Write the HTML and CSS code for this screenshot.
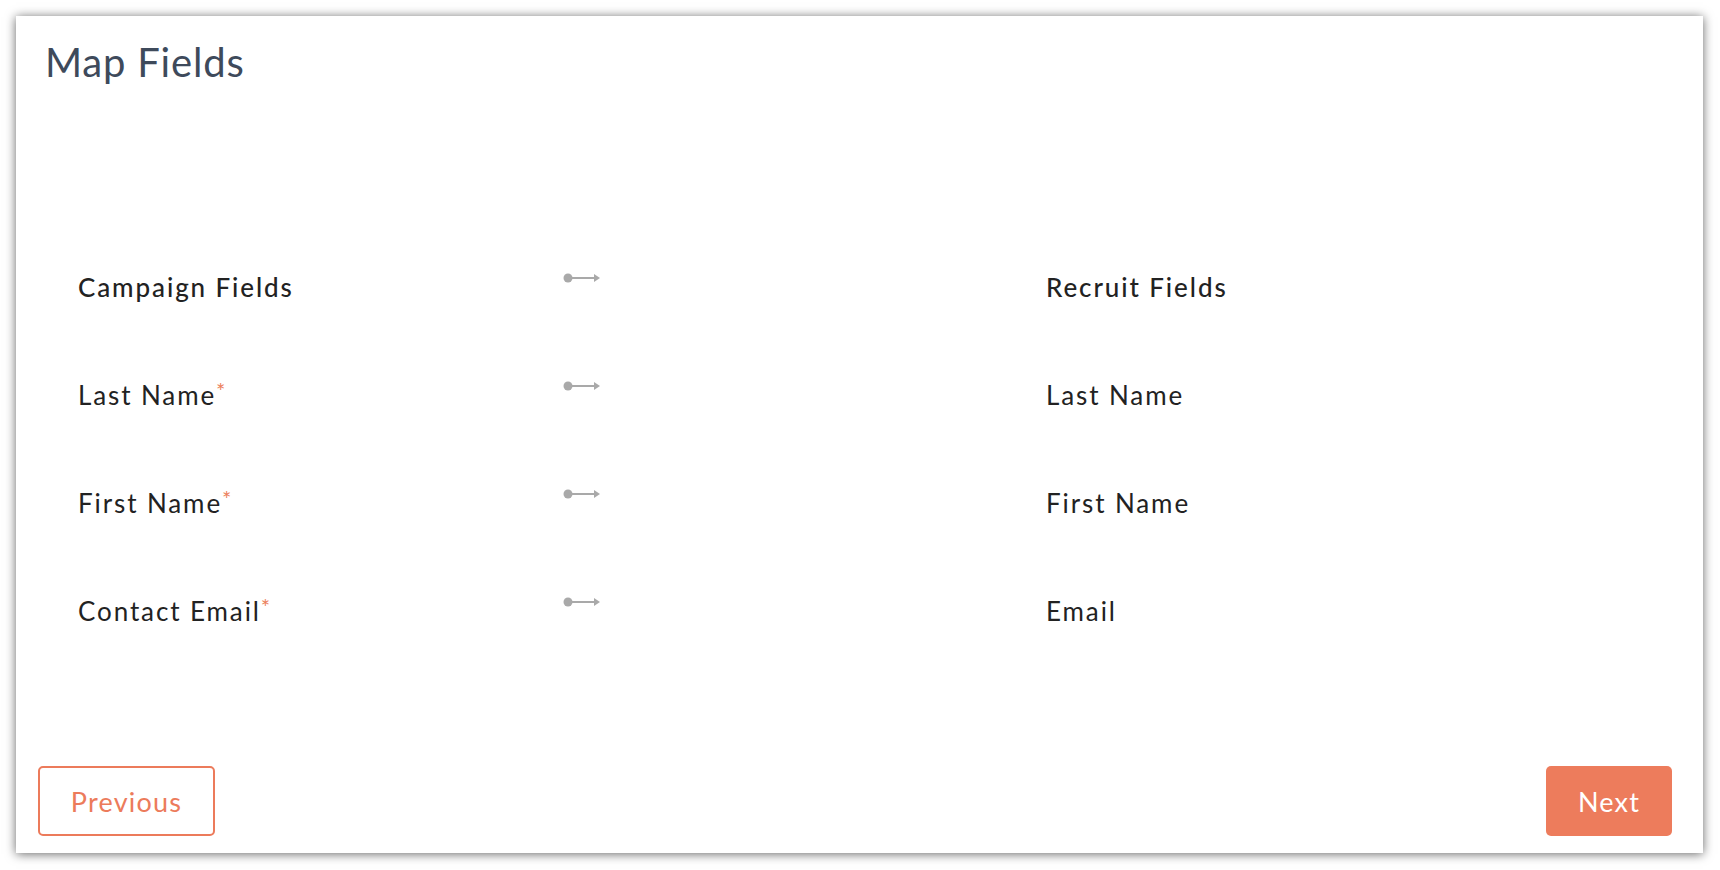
FILE: index.html
```html
<!DOCTYPE html>
<html>
<head>
<meta charset="utf-8">
<link rel="stylesheet" href="styles.css">
</head>
<body>
<div class="card">
  <h1 class="title">Map Fields</h1>
  <div class="mapping">
    <div class="row head">
      <div class="cell">Campaign Fields</div>
      <div class="arrow"><svg width="38" height="12" viewBox="0 0 38 12"><circle cx="5" cy="6" r="4.5" fill="#a9a9a9"/><rect x="5" y="5" width="28" height="2" fill="#a9a9a9"/><path d="M31 2 L37 6 L31 10 Z" fill="#a9a9a9"/></svg></div>
      <div class="cell">Recruit Fields</div>
    </div>
    <div class="row">
      <div class="cell">Last Name<span class="req">*</span></div>
      <div class="arrow"><svg width="38" height="12" viewBox="0 0 38 12"><circle cx="5" cy="6" r="4.5" fill="#a9a9a9"/><rect x="5" y="5" width="28" height="2" fill="#a9a9a9"/><path d="M31 2 L37 6 L31 10 Z" fill="#a9a9a9"/></svg></div>
      <div class="cell">Last Name</div>
    </div>
    <div class="row">
      <div class="cell">First Name<span class="req">*</span></div>
      <div class="arrow"><svg width="38" height="12" viewBox="0 0 38 12"><circle cx="5" cy="6" r="4.5" fill="#a9a9a9"/><rect x="5" y="5" width="28" height="2" fill="#a9a9a9"/><path d="M31 2 L37 6 L31 10 Z" fill="#a9a9a9"/></svg></div>
      <div class="cell">First Name</div>
    </div>
    <div class="row">
      <div class="cell">Contact Email<span class="req">*</span></div>
      <div class="arrow"><svg width="38" height="12" viewBox="0 0 38 12"><circle cx="5" cy="6" r="4.5" fill="#a9a9a9"/><rect x="5" y="5" width="28" height="2" fill="#a9a9a9"/><path d="M31 2 L37 6 L31 10 Z" fill="#a9a9a9"/></svg></div>
      <div class="cell">Email</div>
    </div>
  </div>
  <div class="footer">
    <button class="btn btn-outline">Previous</button>
    <button class="btn btn-fill">Next</button>
  </div>
</div>
</body>
</html>
```
FILE: styles.css
```css
html, body {
  margin: 0;
  padding: 0;
  background: #ffffff;
}
body {
  padding: 16px 17px 17px 16px;
  font-family: Lato, "Liberation Sans", sans-serif;
}
.card {
  box-sizing: border-box;
  height: 837px;
  background: #ffffff;
  box-shadow: 0 1px 10px rgba(0, 0, 0, 0.6);
  display: flex;
  flex-direction: column;
}
.title {
  margin: 0;
  padding: 22px 0 0 29px;
  font-size: 40px;
  line-height: 48px;
  font-weight: 400;
  color: #3e4a5b;
  letter-spacing: 0.8px;
}
.mapping {
  margin-top: 185px;
  padding-left: 62px;
  display: flex;
  flex-direction: column;
  gap: 76px;
}
.row {
  display: grid;
  grid-template-columns: 485px 483px 1fr;
  align-items: start;
  height: 32px;
}
.cell {
  font-size: 26px;
  line-height: 32px;
  color: #222222;
  letter-spacing: 1.9px;
}
.head .cell {
  font-weight: 500;
  letter-spacing: 1.9px;
}
.arrow {
  padding-top: 1px;
  height: 12px;
  line-height: 0;
}
.req {
  color: #ec7f5d;
  font-size: 22px;
  vertical-align: top;
  line-height: 24px;
  margin-left: 0;
  letter-spacing: 0;
}
.footer {
  margin-top: auto;
  padding: 0 31px 17px 22px;
  display: flex;
  justify-content: space-between;
  align-items: flex-end;
}
.btn {
  font-family: Lato, "Liberation Sans", sans-serif;
  font-size: 27px;
  letter-spacing: 1.2px;
  border-radius: 5px;
  height: 70px;
  box-sizing: border-box;
  cursor: pointer;
}
.btn-outline {
  width: 177px;
  background: #ffffff;
  border: 2px solid #ec7b5b;
  color: #ec7b5b;
}
.btn-fill {
  width: 126px;
  background: #ed7c5c;
  border: none;
  color: #ffffff;
}
```
